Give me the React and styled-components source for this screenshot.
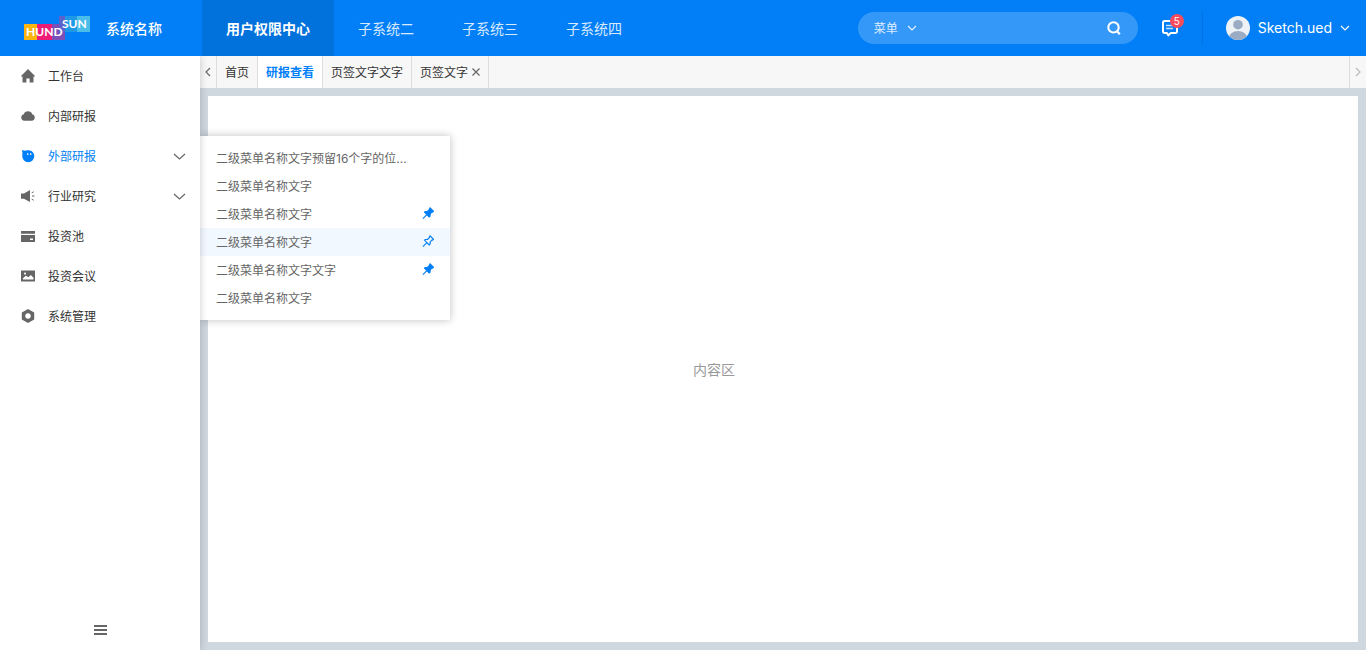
import React, { useState } from 'react';
import styled, { createGlobalStyle } from 'styled-components';

const GlobalStyle = createGlobalStyle`
  * {
    box-sizing: border-box;
  }
  body {
    margin: 0;
    font-family: "Noto Sans CJK SC", sans-serif;
    font-size: 12px;
    line-height: 20px;
    color: #333333;
  }
  button, input, select {
    margin: 0;
    padding: 0;
    border: 0;
    background: none;
    font: inherit;
    color: inherit;
  }
  button {
    cursor: pointer;
  }
  ul {
    margin: 0;
    padding: 0;
    list-style: none;
  }
  a {
    color: inherit;
    text-decoration: none;
  }
  svg {
    display: block;
    flex: none;
  }
`;

const Page = styled.div`
  min-height: 100vh;
  display: flex;
  flex-direction: column;
`;

const Header = styled.header`
  position: relative;
  z-index: 2;
  height: 56px;
  padding: 0 16px 0 24px;
  display: flex;
  align-items: center;
  background: #027ff7;
  color: #ffffff;
`;

const SystemName = styled.h1`
  margin: 0 40px 0 16px;
  font-size: 14px;
  font-weight: 500;
`;

const SystemNav = styled.nav`
  align-self: stretch;
  display: flex;
`;

const SystemLink = styled.a`
  padding: 0 24px;
  display: flex;
  align-items: center;
  font-size: 14px;
  font-weight: ${(props) => (props.$active ? 700 : 400)};
  color: ${(props) => (props.$active ? '#ffffff' : 'rgba(255, 255, 255, 0.85)')};
  background: ${(props) => (props.$active ? '#0171dc' : 'transparent')};
`;

const SearchBox = styled.form`
  width: 280px;
  height: 32px;
  margin-left: auto;
  padding: 0 16px;
  display: flex;
  align-items: center;
  gap: 8px;
  border-radius: 16px;
  background: rgba(255, 255, 255, 0.2);
`;

const SearchType = styled.label`
  display: flex;
  align-items: center;
  gap: 8px;
  color: rgba(255, 255, 255, 0.85);

  select {
    appearance: none;
    outline: none;
  }
`;

const SearchInput = styled.input`
  flex: 1;
  min-width: 0;
  outline: none;
`;

const MessageButton = styled.button`
  position: relative;
  margin-left: 24px;
`;

const Badge = styled.span`
  position: absolute;
  top: -5px;
  right: -6px;
  width: 14px;
  height: 14px;
  border-radius: 7px;
  background: #f84c5c;
  color: #ffffff;
  font-family: Inter, sans-serif;
  font-size: 10px;
  line-height: 14px;
  text-align: center;
`;

const Divider = styled.span`
  width: 1px;
  height: 36px;
  margin: 0 23px 0 24px;
  background: #0173e0;
`;

const UserButton = styled.button`
  display: flex;
  align-items: center;
  gap: 8px;
  font-family: Inter, sans-serif;
  font-size: 14px;
`;

const Body = styled.div`
  flex: 1;
  display: flex;
`;

const Sidebar = styled.aside`
  position: relative;
  z-index: 1;
  width: 200px;
  display: flex;
`;

const SidebarPanel = styled.div`
  flex: 1;
  display: flex;
  flex-direction: column;
  justify-content: space-between;
  background: #ffffff;
  box-shadow: 0 0 8px rgba(0, 0, 0, 0.2);
`;

const MenuItem = styled.li`
  position: relative;
`;

const MenuButton = styled.button`
  width: 100%;
  height: 40px;
  padding: 0 14px 0 21px;
  display: flex;
  align-items: center;
  gap: 13px;
  text-align: left;
  color: ${(props) => (props.$active ? '#027ff7' : '#333333')};

  > svg:first-child {
    color: ${(props) => (props.$active ? '#027ff7' : '#666666')};
  }
  span {
    flex: 1;
  }
  > svg:last-child {
    color: #666666;
  }
`;

const CollapseButton = styled.button`
  height: 40px;
  display: flex;
  align-items: center;
  justify-content: center;
  color: #666666;
`;

const SubMenu = styled.ul`
  position: absolute;
  z-index: -1;
  top: 0;
  left: 100%;
  width: 250px;
  padding: 8px 0;
  background: #ffffff;
  box-shadow: 0 0 8px rgba(0, 0, 0, 0.25);
`;

const SubMenuRow = styled.li`
  height: 28px;
  padding: 0 16px;
  display: flex;
  align-items: center;
  justify-content: space-between;
  background: ${(props) => (props.$hovered ? '#f2f8ff' : 'transparent')};
  color: #666666;
`;

const SubMenuLink = styled.a`
  padding-top: 2px;
  font-family: Inter, "Noto Sans CJK SC", sans-serif;
  white-space: nowrap;
`;

const PinButton = styled.button`
  color: #027ff7;
`;

const Main = styled.main`
  flex: 1;
  min-width: 0;
  display: flex;
  flex-direction: column;
  background: #cfd7df;
`;

const TabBar = styled.div`
  height: 32px;
  display: flex;
  background: #f7f7f7;
`;

const TabArrow = styled.button`
  width: 17px;
  display: flex;
  align-items: center;
  justify-content: center;
  border-${(props) => props.$side}: 1px solid #dddddd;
  color: ${(props) => (props.disabled ? '#bbbbbb' : '#666666')};
`;

const TabList = styled.div`
  flex: 1;
  display: flex;
`;

const TabItem = styled.div`
  padding: 0 8px;
  display: flex;
  align-items: center;
  gap: 4px;
  border-right: 1px solid #dddddd;
  background: ${(props) => (props.$active ? '#ffffff' : 'transparent')};
  color: ${(props) => (props.$active ? '#027ff7' : '#333333')};
  font-weight: ${(props) => (props.$active ? 700 : 400)};
`;

const Content = styled.section`
  flex: 1;
  margin: 8px;
  padding-right: 138px;
  display: flex;
  align-items: center;
  justify-content: center;
  background: #ffffff;
  color: #999999;
  font-size: 14px;
`;

const Logo = () => (
  <svg width="66" height="24" viewBox="0 0 66 24" role="img" aria-label="HUNDSUN">
    <rect x="0" y="8" width="14" height="16" fill="#fcb40e" />
    <rect x="13" y="8" width="15" height="16" fill="#ec1c77" />
    <rect x="28" y="8" width="13" height="16" fill="#7a50b8" />
    <rect x="35" y="0" width="6" height="16" fill="#5b62cc" />
    <rect x="41" y="0" width="12" height="16" fill="#1f98e6" />
    <rect x="53" y="0" width="13" height="16" fill="#4abdea" />
    <g fill="#ffffff" fontFamily="Lato, sans-serif" fontWeight="700" fontSize="12">
      <text x="2" y="20">HUND</text>
      <text x="38" y="12">SUN</text>
    </g>
  </svg>
);

const Chevron = ({ width = 8, height = 5 }) => (
  <svg width={width + 2} height={height + 2} viewBox={`-1 -1 ${width + 2} ${height + 2}`}>
    <path
      d={`M0 0L${width / 2} ${height}L${width} 0`}
      fill="none"
      stroke="currentColor"
      strokeWidth="1.2"
    />
  </svg>
);

const SideArrow = ({ d }) => (
  <svg width="6" height="10" viewBox="0 0 6 10">
    <path d={d} fill="none" stroke="currentColor" strokeWidth="1.2" />
  </svg>
);

const SearchIcon = () => (
  <svg width="16" height="16" viewBox="0 0 16 16">
    <circle cx="7.5" cy="7.4" r="5.2" fill="none" stroke="currentColor" strokeWidth="2" />
    <path d="M10.8 11L13.8 14.2" stroke="currentColor" strokeWidth="2.2" />
  </svg>
);

const MessageIcon = () => (
  <svg width="16" height="18" viewBox="0 0 16 18">
    <path
      d="M2.5 2h11a1.5 1.5 0 0 1 1.5 1.5v9a1.5 1.5 0 0 1-1.5 1.5H8.8L6.3 16.2L4.8 14H2.5A1.5 1.5 0 0 1 1 12.5v-9A1.5 1.5 0 0 1 2.5 2z"
      fill="none"
      stroke="#ffffff"
      strokeWidth="2"
    />
    <path d="M4 6.5h7M4 9.5h7" stroke="#ffffff" strokeWidth="1.5" opacity="0.75" />
  </svg>
);

const Avatar = () => (
  <svg width="24" height="24" viewBox="0 0 24 24">
    <clipPath id="avatar">
      <circle cx="12" cy="12" r="12" />
    </clipPath>
    <g clipPath="url(#avatar)">
      <rect width="24" height="24" fill="#eef1f5" />
      <circle cx="12" cy="8.7" r="4.8" fill="#9aabc4" />
      <ellipse cx="12" cy="21.5" rx="9" ry="6.5" fill="#9aabc4" />
    </g>
  </svg>
);

const MenuIcon = ({ children }) => (
  <svg width="14" height="14" viewBox="0 0 14 14" fill="currentColor">
    {children}
  </svg>
);

const Pin = ({ filled }) => (
  <svg width="12" height="14" viewBox="-0.5 0 12 14">
    <path
      d="M7.6 0.9L11 4.4L10.1 5L9.6 4.9L7.7 6.9L7.5 9.3L6.7 9.9L2.1 5.3L2.7 4.5L5.1 4.3L7.1 2.4L7 1.9z"
      fill={filled ? 'currentColor' : 'none'}
      stroke="currentColor"
      strokeWidth="1.2"
    />
    <path d="M4.4 7.6L0.4 11.6" stroke="currentColor" strokeWidth="1.2" />
  </svg>
);

const icons = {
  home: <path d="M7 0L14 6.9V7.6H12.5V13.5H8.6V9.5H5.4V13.5H1.5V7.6H0V6.9z" />,
  cloud: <path d="M3.3 11.7a3.3 3.3 0 0 1-.5-6.500a4.500 4.500 0 0 1 8.400 0a3.300 3.300 0 0 1-.5 6.500z" />,
  face: (
    <>
      <path d="M1 1Q4 2.2 6 1.3A6 6 0 1 1 1.3 6.5Q1.6 4 1 1z" />
      <path d="M6.7 4.2v1.8M9.7 4.2v1.8" stroke="#ffffff" strokeWidth="1.2" />
    </>
  ),
  horn: (
    <>
      <path d="M0 4.5H3L9 1V13L3 9.8H0z" />
      <path d="M10.7 3.8L12.7 2.8M11 7H13.5M10.7 10.2L12.7 11.2" stroke="currentColor" />
    </>
  ),
  card: (
    <path d="M0 2h14v2.8H0zM0 6h14v7H0zM9 9.5v1.5h3v-1.5z" fillRule="evenodd" />
  ),
  image: (
    <path
      d="M0 1.5h14v11H0zM2 10.5h10.5v-1.8L9.8 6L7.5 8.3L4.8 6.8L2 9.3zM4 3.5a1 1 0 1 0 .01 0z"
      fillRule="evenodd"
    />
  ),
  setting: (
    <path
      d="M7 0L13.2 3.5V10.5L7 14L0.8 10.5V3.5zM7 4.2a2.8 2.8 0 1 0 .01 0z"
      fillRule="evenodd"
    />
  ),
};

const systems = ['用户权限中心', '子系统二', '子系统三', '子系统四'];

const menus = [
  { name: '工作台', icon: 'home' },
  { name: '内部研报', icon: 'cloud' },
  { name: '外部研报', icon: 'face', expandable: true },
  { name: '行业研究', icon: 'horn', expandable: true },
  { name: '投资池', icon: 'card' },
  { name: '投资会议', icon: 'image' },
  { name: '系统管理', icon: 'setting' },
];

const subMenus = [
  { name: '二级菜单名称文字预留16个字的位...' },
  { name: '二级菜单名称文字' },
  { name: '二级菜单名称文字', pin: 'filled' },
  { name: '二级菜单名称文字', pin: 'outline', hovered: true },
  { name: '二级菜单名称文字文字', pin: 'filled' },
  { name: '二级菜单名称文字' },
];

const tabs = [
  { name: '首页' },
  { name: '研报查看' },
  { name: '页签文字文字' },
  { name: '页签文字', closable: true },
];

const App = () => {
  const [activeMenu, setActiveMenu] = useState(2);
  const [activeTab, setActiveTab] = useState(1);

  return (
    <Page>
      <GlobalStyle />
      <Header>
        <Logo />
        <SystemName>系统名称</SystemName>
        <SystemNav>
          {systems.map((name, index) => (
            <SystemLink key={name} href="#" $active={index === 0}>
              {name}
            </SystemLink>
          ))}
        </SystemNav>
        <SearchBox onSubmit={(e) => e.preventDefault()}>
          <SearchType>
            <select aria-label="搜索类型">
              <option>菜单</option>
            </select>
            <Chevron height={4} />
          </SearchType>
          <SearchInput type="text" aria-label="搜索" />
          <button type="submit" aria-label="搜索">
            <SearchIcon />
          </button>
        </SearchBox>
        <MessageButton aria-label="消息">
          <MessageIcon />
          <Badge>5</Badge>
        </MessageButton>
        <Divider />
        <UserButton>
          <Avatar />
          Sketch.ued
          <Chevron height={4} />
        </UserButton>
      </Header>
      <Body>
        <Sidebar>
          <SidebarPanel>
            <ul>
              {menus.map((menu, index) => (
                <MenuItem key={menu.name}>
                  <MenuButton $active={index === activeMenu} onClick={() => setActiveMenu(index)}>
                    <MenuIcon>{icons[menu.icon]}</MenuIcon>
                    <span>{menu.name}</span>
                    {menu.expandable && <Chevron width={11} height={5} />}
                  </MenuButton>
                  {menu.expandable && index === activeMenu && (
                    <SubMenu>
                      {subMenus.map((item, i) => (
                        <SubMenuRow key={i} $hovered={item.hovered}>
                          <SubMenuLink href="#">{item.name}</SubMenuLink>
                          {item.pin && (
                            <PinButton aria-label="固定">
                              <Pin filled={item.pin === 'filled'} />
                            </PinButton>
                          )}
                        </SubMenuRow>
                      ))}
                    </SubMenu>
                  )}
                </MenuItem>
              ))}
            </ul>
            <CollapseButton aria-label="收起菜单">
              <svg width="13" height="10" viewBox="0 0 13 10" fill="currentColor">
                <path d="M0 0h13v2H0zM0 4h13v2H0zM0 8h13v2H0z" />
              </svg>
            </CollapseButton>
          </SidebarPanel>
        </Sidebar>
        <Main>
          <TabBar>
            <TabArrow $side="right" aria-label="向左">
              <SideArrow d="M5 1L1 5L5 9" />
            </TabArrow>
            <TabList>
              {tabs.map((tab, index) => (
                <TabItem key={tab.name} $active={index === activeTab}>
                  <button onClick={() => setActiveTab(index)}>{tab.name}</button>
                  {tab.closable && (
                    <button aria-label="关闭">
                      <svg width="8" height="8" viewBox="0 0 8 8">
                        <path d="M0.5 0.5L7.5 7.5M7.5 0.5L0.5 7.5" stroke="#666666" strokeWidth="1.2" />
                      </svg>
                    </button>
                  )}
                </TabItem>
              ))}
            </TabList>
            <TabArrow $side="left" aria-label="向右" disabled>
              <SideArrow d="M1 1L5 5L1 9" />
            </TabArrow>
          </TabBar>
          <Content>内容区</Content>
        </Main>
      </Body>
    </Page>
  );
};

export default App;
